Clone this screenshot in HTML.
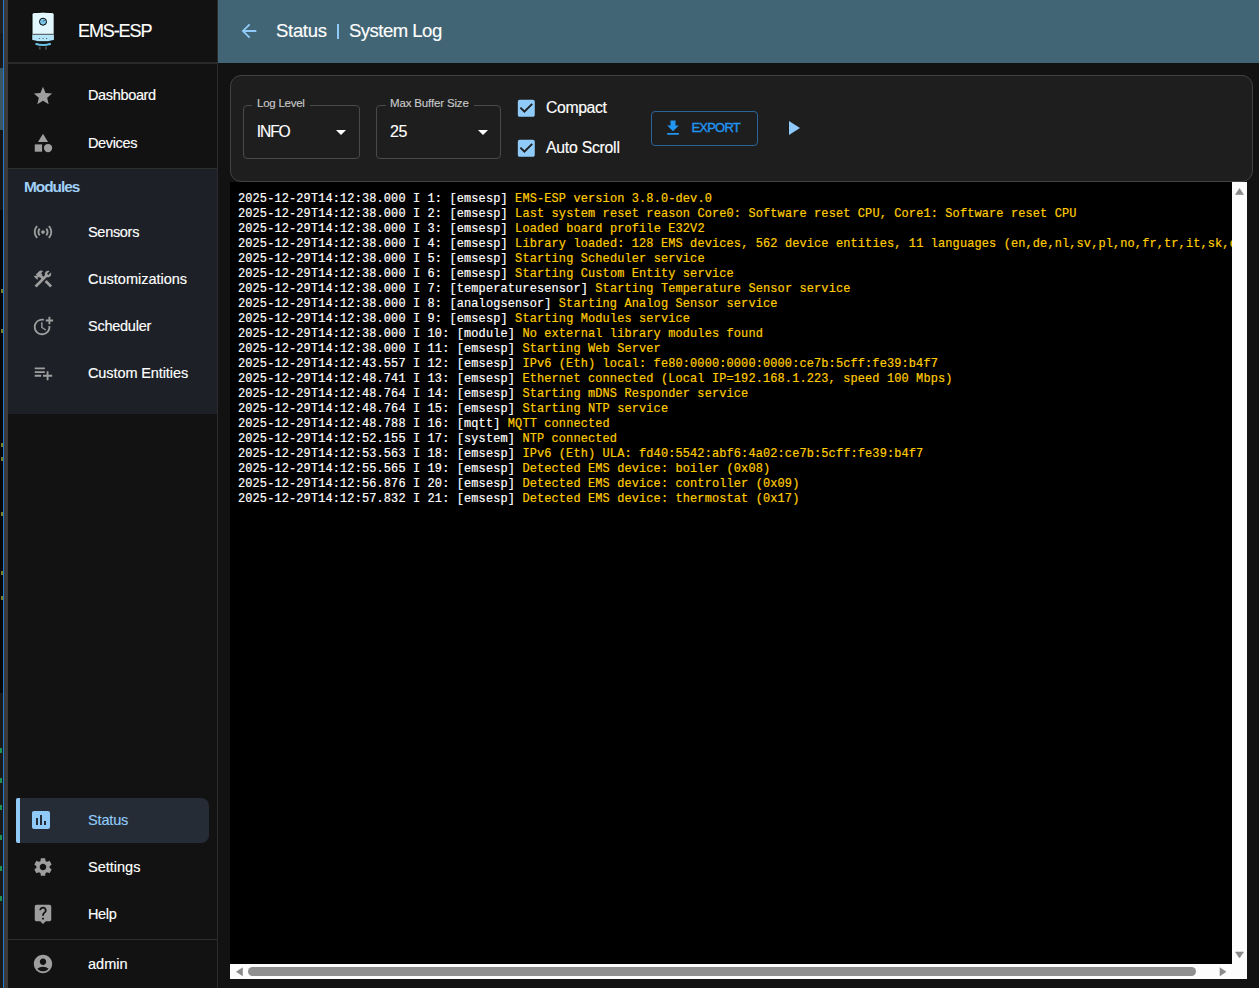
<!DOCTYPE html>
<html><head><meta charset="utf-8">
<style>
*{box-sizing:border-box;margin:0;padding:0}
html,body{width:1259px;height:988px;overflow:hidden;background:#121212;font-family:"Liberation Sans",sans-serif;color:#fff}
.abs{position:absolute}
.t{white-space:nowrap;-webkit-text-stroke:0.15px currentColor}
#log{left:230px;top:182px;width:1002px;height:782px;background:#000;overflow:hidden}
#logtxt{position:absolute;left:8px;top:10px;font-family:"Liberation Mono",monospace;font-size:11.9px;letter-spacing:0.156px;line-height:15px;white-space:pre;color:#fff;-webkit-text-stroke:0.2px currentColor}
.y{color:#ffcc00}
</style></head><body>
<div class="abs" style="left:0;top:0;width:4px;height:988px;background:#1a1a1a"></div>
<div class="abs" style="left:0;top:0;width:3px;height:33px;background:#222"></div>
<div class="abs" style="left:0;top:68px;width:3px;height:62px;background:#3a5663"></div>
<div class="abs" style="left:0;top:130px;width:3px;height:80px;background:#151515"></div>
<div class="abs" style="left:0;top:210px;width:3px;height:483px;background:#070707"></div>
<div class="abs" style="left:0;top:693px;width:3px;height:295px;background:#1a1a1a"></div>
<div class="abs" style="left:1px;top:443px;width:2px;height:4px;background:#7a7a20"></div>
<div class="abs" style="left:1px;top:457px;width:2px;height:4px;background:#7a7a20"></div>
<div class="abs" style="left:1px;top:512px;width:2px;height:4px;background:#7a7a20"></div>
<div class="abs" style="left:1px;top:571px;width:2px;height:4px;background:#7a7a20"></div>
<div class="abs" style="left:1px;top:596px;width:2px;height:4px;background:#7a7a20"></div>
<div class="abs" style="left:1px;top:289px;width:2px;height:4px;background:#7a7a20"></div>
<div class="abs" style="left:1px;top:329px;width:2px;height:4px;background:#7a7a20"></div>
<div class="abs" style="left:0;top:748px;width:2px;height:5px;background:#1f8f50"></div>
<div class="abs" style="left:0;top:778px;width:2px;height:5px;background:#1f8f50"></div>
<div class="abs" style="left:0;top:805px;width:2px;height:5px;background:#1f8f50"></div>
<div class="abs" style="left:0;top:835px;width:2px;height:5px;background:#1f8f50"></div>
<div class="abs" style="left:0;top:866px;width:2px;height:5px;background:#1f8f50"></div>
<div class="abs" style="left:0;top:896px;width:2px;height:5px;background:#1f8f50"></div>
<div class="abs" style="left:3px;top:0;width:1.3px;height:988px;background:#1f7ad0"></div>
<div class="abs" style="left:4.3px;top:0;width:3.7px;height:988px;background:#3a3a3a"></div>
<div class="abs" style="left:8px;top:0;width:210px;height:988px;background:#121212;border-right:1px solid #2b2b2b;border-top-left-radius:6px"></div>
<div class="abs" style="left:8px;top:62px;width:209px;height:2px;background:#2a2a2a"></div>
<div class="abs" style="left:8px;top:169px;width:209px;height:245px;background:#1d2127"></div>
<div class="abs" style="left:8px;top:168px;width:209px;height:1px;background:#2e2e2e"></div>
<svg class="abs" style="left:24px;top:11px" width="40" height="40" viewBox="0 0 40 40">
<path d="M8 3.2 Q8 1.8 10 1.6 Q19 0.6 28.2 1.6 Q30.2 1.8 30.2 3.2 L30.2 29.2 Q19 32 8 29.2 Z" fill="#e1f6fd" stroke="#000" stroke-width="1"/>
<path d="M8.5 23.6 L29.7 23.6 L29.7 28.9 Q19 31.5 8.5 28.9 Z" fill="#b3e4f8"/>
<path d="M8.5 23.3 L29.7 23.3" stroke="#222" stroke-width="0.8"/>
<circle cx="19" cy="10.7" r="3.5" fill="#7cc8ea" stroke="#000" stroke-width="1"/>
<path d="M19 10.7 L20.6 9" stroke="#123" stroke-width="0.8"/>
<circle cx="15.3" cy="27.5" r="0.6" fill="#444"/><circle cx="19" cy="27.5" r="0.6" fill="#444"/><circle cx="22.6" cy="27.5" r="0.6" fill="#444"/>
<path d="M11.5 32.8 Q19 35.3 26.8 32.8" stroke="#6cc3ea" stroke-width="2" fill="none"/>
<rect x="14.8" y="35.6" width="1.8" height="3" fill="#484848"/><rect x="21" y="35.6" width="1.8" height="3" fill="#484848"/>
</svg>
<div class="abs t" style="left:78px;top:21.01px;font-size:18px;line-height:20.7px;letter-spacing:-1.1px;color:#fff;font-weight:normal;">EMS-ESP</div>
<div class="abs t" style="left:24px;top:178.11px;font-size:15.4px;line-height:17.71px;letter-spacing:-1.0px;color:#a0d0f8;font-weight:bold;-webkit-text-stroke:0;">Modules</div>
<svg class="abs" style="left:32.0px;top:84.7px;fill:#9e9e9e" width="22" height="22" viewBox="0 0 24 24"><path d="M12 17.27 18.18 21l-1.64-7.03L22 9.24l-7.19-.61L12 2 9.19 8.63 2 9.24l5.46 4.73L5.82 21z"/></svg>
<div class="abs t" style="left:88px;top:87.44px;font-size:14.5px;line-height:16.67px;letter-spacing:-0.35px;color:#fff;font-weight:normal;">Dashboard</div>
<svg class="abs" style="left:32.0px;top:132.0px;fill:#9e9e9e" width="22" height="22" viewBox="0 0 24 24"><path d="M12 2l-5.5 9h11z"/><circle cx="17.5" cy="17.5" r="4.5"/><path d="M3 13.5h8v8H3z"/></svg>
<div class="abs t" style="left:88px;top:134.54px;font-size:14.5px;line-height:16.67px;letter-spacing:-0.35px;color:#fff;font-weight:normal;">Devices</div>
<svg class="abs" style="left:32.0px;top:221.0px;fill:#9e9e9e" width="22" height="22" viewBox="0 0 24 24"><path d="M7.76 16.24C6.67 15.16 6 13.66 6 12s.67-3.16 1.76-4.24l1.42 1.42C8.45 9.9 8 10.9 8 12c0 1.1.45 2.1 1.17 2.83zm8.48 0C17.33 15.16 18 13.66 18 12s-.67-3.16-1.76-4.24l-1.42 1.42C15.55 9.9 16 10.9 16 12c0 1.1-.45 2.1-1.17 2.83zM12 10c-1.1 0-2 .9-2 2s.9 2 2 2 2-.9 2-2-.9-2-2-2m8 2c0 2.21-.9 4.21-2.35 5.65l1.42 1.42C20.88 17.26 22 14.76 22 12s-1.12-5.26-2.93-7.07l-1.42 1.42C19.1 7.79 20 9.79 20 12M6.35 6.35 4.93 4.93C3.12 6.74 2 9.24 2 12s1.12 5.26 2.93 7.07l1.42-1.42C4.9 16.21 4 14.21 4 12s.9-4.21 2.35-5.65"/></svg>
<div class="abs t" style="left:88px;top:223.64px;font-size:14.5px;line-height:16.67px;letter-spacing:-0.3px;color:#fff;font-weight:normal;">Sensors</div>
<svg class="abs" style="left:32.0px;top:268.0px;fill:#9e9e9e" width="22" height="22" viewBox="0 0 24 24"><path d="m13.7826 15.1719 2.1213-2.1213 5.9963 5.9962-2.1213 2.1213zM17.5 10c1.93 0 3.5-1.57 3.5-3.5 0-.58-.16-1.12-.41-1.6l-2.7 2.7-1.49-1.49 2.7-2.7c-.48-.25-1.02-.41-1.6-.41C15.57 3 14 4.57 14 6.5c0 .41.08.8.21 1.16l-1.85 1.85-1.78-1.78.71-.71-1.41-1.41L12 3.49c-1.17-1.17-3.07-1.17-4.24 0L4.22 7.03l1.41 1.41H2.81l-.71.71 3.54 3.54.71-.71V9.15l1.41 1.41.71-.71 1.78 1.78-7.41 7.41 2.12 2.12L16.34 9.79c.36.13.75.21 1.16.21"/></svg>
<div class="abs t" style="left:88px;top:270.84px;font-size:14.5px;line-height:16.67px;letter-spacing:0px;color:#fff;font-weight:normal;">Customizations</div>
<svg class="abs" style="left:32.0px;top:315.0px;fill:#9e9e9e" width="22" height="22" viewBox="0 0 24 24"><path d="M10 8v6l4.7 2.9.8-1.2-4-2.4V8z"/><path d="M17.92 12c.05.33.08.66.08 1 0 3.9-3.1 7-7 7s-7-3.1-7-7 3.1-7 7-7c.7 0 1.37.1 2 .29V4.23c-.64-.15-1.31-.23-2-.23-5 0-9 4-9 9s4 9 9 9 9-4 9-9c0-.34-.02-.67-.06-1z"/><path d="M20 5V2h-2v3h-3v2h3v3h2V7h3V5z"/></svg>
<div class="abs t" style="left:88px;top:317.64px;font-size:14.5px;line-height:16.67px;letter-spacing:-0.25px;color:#fff;font-weight:normal;">Scheduler</div>
<svg class="abs" style="left:32.0px;top:362.0px;fill:#9e9e9e" width="22" height="22" viewBox="0 0 24 24"><path d="M14 10H3v2h11zm0-4H3v2h11zM3 16h7v-2H3zm15-2v-4h-2v4h-4v2h4v4h2v-4h4v-2z"/></svg>
<div class="abs t" style="left:88px;top:364.84px;font-size:14.5px;line-height:16.67px;letter-spacing:-0.1px;color:#fff;font-weight:normal;">Custom Entities</div>
<svg class="abs" style="left:32.0px;top:856.0px;fill:#9e9e9e" width="22" height="22" viewBox="0 0 24 24"><path d="M19.14 12.94c.04-.3.06-.61.06-.94 0-.32-.02-.64-.07-.94l2.03-1.58c.18-.14.23-.41.12-.61l-1.92-3.32c-.12-.22-.37-.29-.59-.22l-2.39.96c-.5-.38-1.03-.7-1.62-.94l-.36-2.54c-.04-.24-.24-.41-.48-.41h-3.84c-.24 0-.43.17-.47.41l-.36 2.54c-.59.24-1.13.57-1.62.94l-2.39-.96c-.22-.08-.47 0-.59.22L2.74 8.87c-.12.21-.08.47.12.61l2.03 1.58c-.05.3-.09.63-.09.94s.02.64.07.94l-2.03 1.58c-.18.14-.23.41-.12.61l1.92 3.32c.12.22.37.29.59.22l2.39-.96c.5.38 1.03.7 1.62.94l.36 2.54c.05.24.24.41.48.41h3.84c.24 0 .44-.17.47-.41l.36-2.54c.59-.24 1.13-.56 1.62-.94l2.39.96c.22.08.47 0 .59-.22l1.92-3.32c.12-.22.07-.47-.12-.61zM12 15.6c-1.98 0-3.6-1.62-3.6-3.6s1.62-3.6 3.6-3.6 3.6 1.62 3.6 3.6-1.62 3.6-3.6 3.6"/></svg>
<div class="abs t" style="left:88px;top:858.64px;font-size:14.5px;line-height:16.67px;letter-spacing:0px;color:#fff;font-weight:normal;">Settings</div>
<svg class="abs" style="left:32.0px;top:903.0px;fill:#9e9e9e" width="22" height="22" viewBox="0 0 24 24"><path d="M19 2H5c-1.11 0-2 .9-2 2v14c0 1.1.89 2 2 2h4l3 3 3-3h4c1.1 0 2-.9 2-2V4c0-1.1-.9-2-2-2m-6 16h-2v-2h2zm2.07-7.75-.9.92C13.45 11.9 13 12.5 13 14h-2v-.5c0-1.1.45-2.1 1.17-2.83l1.24-1.26c.37-.36.59-.86.59-1.41 0-1.1-.9-2-2-2s-2 .9-2 2H8c0-2.21 1.79-4 4-4s4 1.79 4 4c0 .88-.36 1.68-.93 2.25"/></svg>
<div class="abs t" style="left:88px;top:905.64px;font-size:14.5px;line-height:16.67px;letter-spacing:-0.35px;color:#fff;font-weight:normal;">Help</div>
<svg class="abs" style="left:32.0px;top:953.0px;fill:#9e9e9e" width="22" height="22" viewBox="0 0 24 24"><path d="M12 2C6.48 2 2 6.48 2 12s4.48 10 10 10 10-4.48 10-10S17.52 2 12 2m0 4c1.93 0 3.5 1.57 3.5 3.5S13.93 13 12 13s-3.5-1.57-3.5-3.5S10.07 6 12 6m0 14c-2.03 0-4.43-.82-6.14-2.88C7.55 15.8 9.68 15 12 15s4.45.8 6.14 2.12C16.43 19.18 14.03 20 12 20"/></svg>
<div class="abs t" style="left:88px;top:955.64px;font-size:14.5px;line-height:16.67px;letter-spacing:0px;color:#fff;font-weight:normal;">admin</div>
<div class="abs" style="left:16px;top:798px;width:193px;height:45px;background:#262c35;border-radius:0 8px 8px 0"></div>
<div class="abs" style="left:16px;top:798px;width:4px;height:45px;background:#90caf9;border-radius:2px 0 0 2px"></div>
<svg class="abs" style="left:29.0px;top:808.0px;fill:#90caf9" width="24" height="24" viewBox="0 0 24 24"><path d="M19 3H5c-1.1 0-2 .9-2 2v14c0 1.1.9 2 2 2h14c1.1 0 2-.9 2-2V5c0-1.1-.9-2-2-2M9 17H7v-7h2zm4 0h-2V7h2zm4 0h-2v-4h2z"/></svg>
<div class="abs t" style="left:88px;top:811.64px;font-size:14.5px;line-height:16.67px;letter-spacing:-0.15px;color:#90caf9;font-weight:normal;">Status</div>
<div class="abs" style="left:8px;top:939px;width:209px;height:1px;background:#2e2e2e"></div>
<div class="abs" style="left:218px;top:0;width:1041px;height:63px;background:#426575"></div>
<svg class="abs" style="left:238.3px;top:20.0px;fill:#90caf9" width="22" height="22" viewBox="0 0 24 24"><path d="M20 11H7.83l5.59-5.59L12 4l-8 8 8 8 1.41-1.41L7.83 13H20z"/></svg>
<div class="abs t" style="left:276px;top:19.95px;font-size:18.5px;line-height:21.27px;letter-spacing:-0.3px;color:#fff;font-weight:normal;">Status</div>
<div class="abs" style="left:337.2px;top:24px;width:1.6px;height:15px;background:#90caf9"></div>
<div class="abs t" style="left:349px;top:19.95px;font-size:18.5px;line-height:21.27px;letter-spacing:-0.5px;color:#fff;font-weight:normal;">System Log</div>
<div class="abs" style="left:230px;top:75px;width:1023px;height:107px;background:#1e1e1e;border:1px solid #424242;border-radius:11px"></div>
<div class="abs" style="left:243px;top:105px;width:117px;height:54px;border:1px solid #4a4a4a;border-radius:4px"></div>
<div class="abs" style="left:252px;top:100px;width:58px;height:10px;background:#1e1e1e"></div>
<div class="abs t" style="left:257px;top:96.91px;font-size:11.5px;line-height:13.22px;letter-spacing:-0.25px;color:#c8c8c8;font-weight:normal;">Log Level</div>
<div class="abs t" style="left:256.8px;top:123.22px;font-size:15.6px;line-height:17.94px;letter-spacing:-1.1px;color:#fff;font-weight:normal;">INFO</div>
<svg class="abs" style="left:329px;top:120px;fill:#fff" width="24" height="24" viewBox="0 0 24 24"><path d="M7 10l5 5 5-5z"/></svg>
<div class="abs" style="left:376px;top:105px;width:125px;height:54px;border:1px solid #4a4a4a;border-radius:4px"></div>
<div class="abs" style="left:386px;top:100px;width:88px;height:10px;background:#1e1e1e"></div>
<div class="abs t" style="left:390px;top:96.91px;font-size:11.5px;line-height:13.22px;letter-spacing:-0.15px;color:#c8c8c8;font-weight:normal;">Max Buffer Size</div>
<div class="abs t" style="left:390px;top:122.96px;font-size:16px;line-height:18.4px;letter-spacing:-0.3px;color:#fff;font-weight:normal;">25</div>
<svg class="abs" style="left:471px;top:120px;fill:#fff" width="24" height="24" viewBox="0 0 24 24"><path d="M7 10l5 5 5-5z"/></svg>
<svg class="abs" style="left:515.2px;top:96.8px;fill:#90caf9" width="22.6" height="22.6" viewBox="0 0 24 24"><path d="M19 3H5c-1.11 0-2 .9-2 2v14c0 1.1.89 2 2 2h14c1.11 0 2-.9 2-2V5c0-1.1-.89-2-2-2m-9 14-5-5 1.41-1.41L10 14.17l7.59-7.59L19 8z"/></svg>
<div class="abs t" style="left:546px;top:98.74px;font-size:15.8px;line-height:18.17px;letter-spacing:-0.4px;color:#fff;font-weight:normal;">Compact</div>
<svg class="abs" style="left:515.2px;top:136.8px;fill:#90caf9" width="22.6" height="22.6" viewBox="0 0 24 24"><path d="M19 3H5c-1.11 0-2 .9-2 2v14c0 1.1.89 2 2 2h14c1.11 0 2-.9 2-2V5c0-1.1-.89-2-2-2m-9 14-5-5 1.41-1.41L10 14.17l7.59-7.59L19 8z"/></svg>
<div class="abs t" style="left:546px;top:138.74px;font-size:15.8px;line-height:18.17px;letter-spacing:-0.25px;color:#fff;font-weight:normal;">Auto Scroll</div>
<div class="abs" style="left:651px;top:111px;width:107px;height:35px;border:1px solid #2a659a;border-radius:4px"></div>
<svg class="abs" style="left:663.0px;top:117.7px;fill:#2196f3" width="20" height="20" viewBox="0 0 24 24"><path d="M5 20h14v-2H5zM19 9h-4V3H9v6H5l7 7z"/></svg>
<div class="abs t" style="left:691.5px;top:121.22px;font-size:13px;line-height:14.95px;letter-spacing:-0.8px;color:#2196f3;font-weight:normal;-webkit-text-stroke:0.35px #2196f3;">EXPORT</div>
<svg class="abs" style="left:781.0px;top:116.0px;fill:#90caf9" width="24" height="24" viewBox="0 0 24 24"><path d="M8 5v14l11-7z"/></svg>
<div id="log" class="abs"><div id="logtxt">2025-12-29T14:12:38.000 I 1: [emsesp] <span class="y">EMS-ESP version 3.8.0-dev.0</span>
2025-12-29T14:12:38.000 I 2: [emsesp] <span class="y">Last system reset reason Core0: Software reset CPU, Core1: Software reset CPU</span>
2025-12-29T14:12:38.000 I 3: [emsesp] <span class="y">Loaded board profile E32V2</span>
2025-12-29T14:12:38.000 I 4: [emsesp] <span class="y">Library loaded: 128 EMS devices, 562 device entities, 11 languages (en,de,nl,sv,pl,no,fr,tr,it,sk,cz)</span>
2025-12-29T14:12:38.000 I 5: [emsesp] <span class="y">Starting Scheduler service</span>
2025-12-29T14:12:38.000 I 6: [emsesp] <span class="y">Starting Custom Entity service</span>
2025-12-29T14:12:38.000 I 7: [temperaturesensor] <span class="y">Starting Temperature Sensor service</span>
2025-12-29T14:12:38.000 I 8: [analogsensor] <span class="y">Starting Analog Sensor service</span>
2025-12-29T14:12:38.000 I 9: [emsesp] <span class="y">Starting Modules service</span>
2025-12-29T14:12:38.000 I 10: [module] <span class="y">No external library modules found</span>
2025-12-29T14:12:38.000 I 11: [emsesp] <span class="y">Starting Web Server</span>
2025-12-29T14:12:43.557 I 12: [emsesp] <span class="y">IPv6 (Eth) local: fe80:0000:0000:0000:ce7b:5cff:fe39:b4f7</span>
2025-12-29T14:12:48.741 I 13: [emsesp] <span class="y">Ethernet connected (Local IP=192.168.1.223, speed 100 Mbps)</span>
2025-12-29T14:12:48.764 I 14: [emsesp] <span class="y">Starting mDNS Responder service</span>
2025-12-29T14:12:48.764 I 15: [emsesp] <span class="y">Starting NTP service</span>
2025-12-29T14:12:48.788 I 16: [mqtt] <span class="y">MQTT connected</span>
2025-12-29T14:12:52.155 I 17: [system] <span class="y">NTP connected</span>
2025-12-29T14:12:53.563 I 18: [emsesp] <span class="y">IPv6 (Eth) ULA: fd40:5542:abf6:4a02:ce7b:5cff:fe39:b4f7</span>
2025-12-29T14:12:55.565 I 19: [emsesp] <span class="y">Detected EMS device: boiler (0x08)</span>
2025-12-29T14:12:56.876 I 20: [emsesp] <span class="y">Detected EMS device: controller (0x09)</span>
2025-12-29T14:12:57.832 I 21: [emsesp] <span class="y">Detected EMS device: thermostat (0x17)</span></div></div>
<div class="abs" style="left:1232px;top:182px;width:15px;height:797px;background:#fcfcfc"></div>
<div class="abs" style="left:230px;top:964px;width:1017px;height:15px;background:#fcfcfc"></div>
<svg class="abs" style="left:1232px;top:182px" width="15" height="797" viewBox="0 0 15 797">
<path d="M3.5 12.5 L7.5 6.5 L11.5 12.5 Z" fill="#8a8a8a" stroke="#8a8a8a" stroke-width="0.6" stroke-linejoin="round"/>
<path d="M3.5 770 L7.5 776 L11.5 770 Z" fill="#8a8a8a" stroke="#8a8a8a" stroke-width="0.6" stroke-linejoin="round"/>
</svg>
<svg class="abs" style="left:230px;top:964px" width="1002" height="15" viewBox="0 0 1002 15">
<path d="M12.5 3.8 L6.5 7.8 L12.5 11.8 Z" fill="#8a8a8a" stroke="#8a8a8a" stroke-width="0.6" stroke-linejoin="round"/>
<path d="M990 3.8 L996 7.8 L990 11.8 Z" fill="#8a8a8a" stroke="#8a8a8a" stroke-width="0.6" stroke-linejoin="round"/>
<rect x="18" y="3" width="948" height="9" rx="4.5" fill="#8f8f8f"/>
</svg>
</body></html>
